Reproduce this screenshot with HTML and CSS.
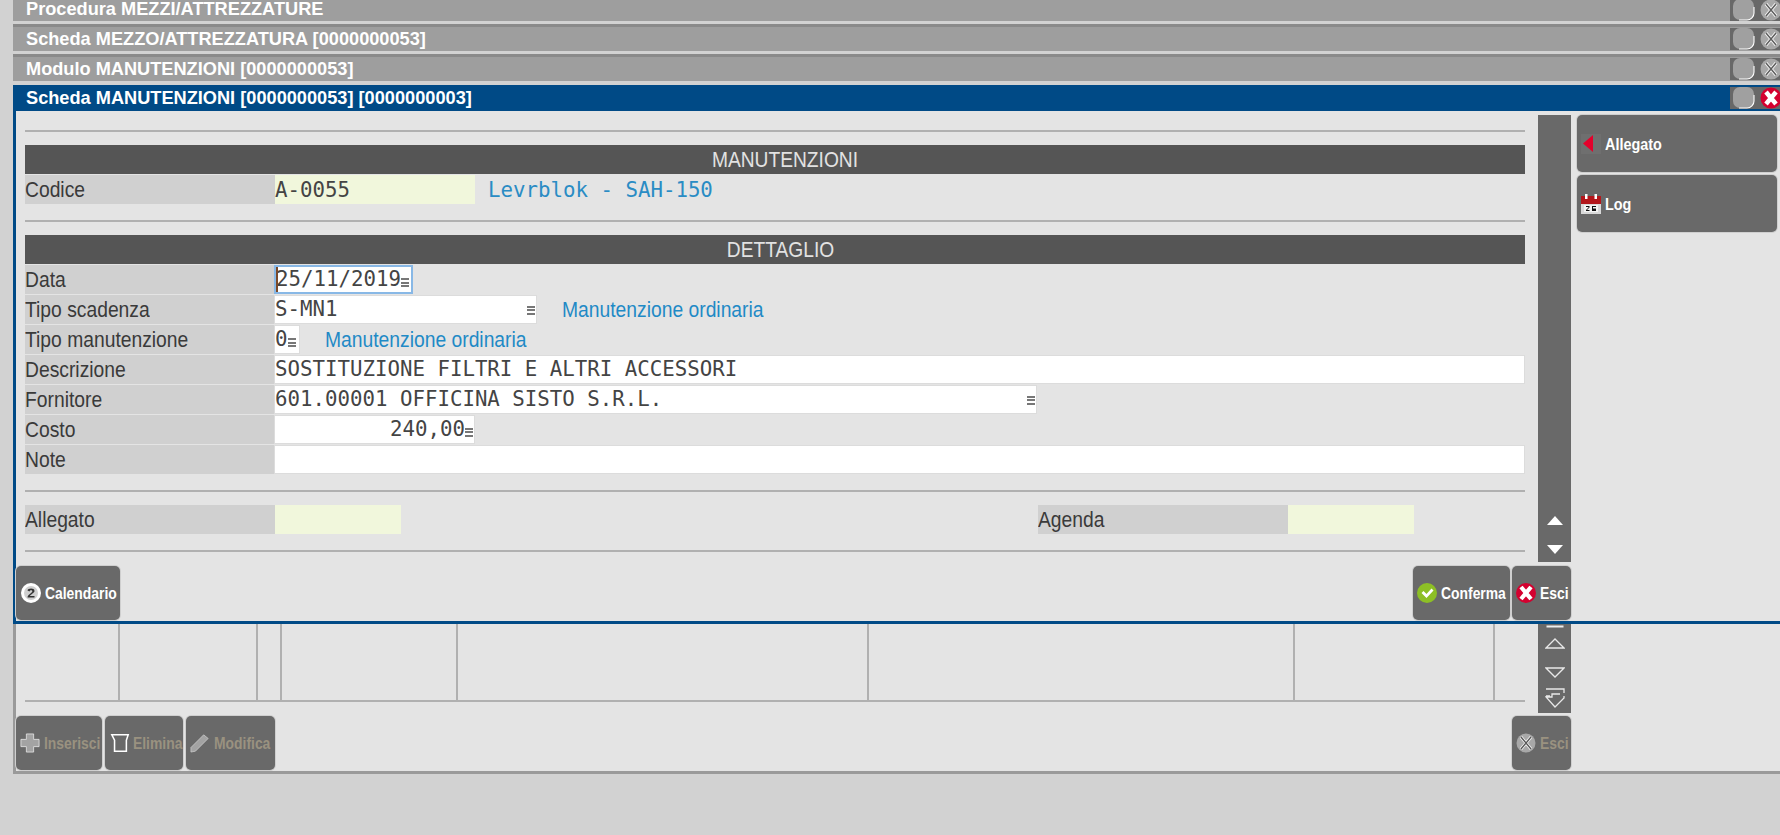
FILE: index.html
```html
<!DOCTYPE html>
<html lang="it">
<head>
<meta charset="utf-8">
<title>Scheda MANUTENZIONI</title>
<link rel="stylesheet" href="styles.css">
</head>
<body>
<div class="desk">
  <div class="tbar tbar-first"><span class="ttext">Procedura MEZZI/ATTREZZATURE</span>
    <span class="wbtns"><svg class="wi" viewBox="0 0 50 22"><use href="#min"/><use href="#tool"/></svg></span></div>
  <div class="tbar"><span class="ttext">Scheda MEZZO/ATTREZZATURA [0000000053]</span>
    <span class="wbtns"><svg class="wi" viewBox="0 0 50 22"><use href="#min"/><use href="#tool"/></svg></span></div>
  <div class="tbar tbar-last"><span class="ttext">Modulo MANUTENZIONI [0000000053]</span>
    <span class="wbtns"><svg class="wi" viewBox="0 0 50 22"><use href="#min"/><use href="#tool"/></svg></span></div>

  <div class="tbar tbar-active"><span class="ttext">Scheda MANUTENZIONI [0000000053] [0000000003]</span>
    <span class="wbtns"><svg class="wi" viewBox="0 0 50 22"><use href="#min"/><circle cx="41" cy="11" r="10.5" fill="#d4002f"/><path d="M36 5l10 12M46 5L36 17" stroke="#fff" stroke-width="4.500"/></svg></span></div>

  <div class="panel">
    <div class="panel-main">
      <div class="form">
        <hr class="rule">
        <div class="shead"><span class="tall">MANUTENZIONI</span></div>
        <div class="row">
          <div class="lab"><span class="tall">Codice</span></div>
          <div class="fld ro w200">A-0055</div>
          <div class="dmono">Levrblok - SAH-150</div>
        </div>
        <hr class="rule rule-b">
        <div class="shead shead-d"><span class="tall">DETTAGLIO</span></div>
        <div class="row">
          <div class="lab"><span class="tall">Data</span></div>
          <div class="fld wdata focus"><span class="caret"></span>25/11/2019<span class="mk"></span></div>
        </div>
        <div class="row">
          <div class="lab"><span class="tall">Tipo scadenza</span></div>
          <div class="fld wtipo">S-MN1<span class="mk mk-end"></span></div>
          <div class="dsans d-tipo"><span class="tall">Manutenzione ordinaria</span></div>
        </div>
        <div class="row">
          <div class="lab"><span class="tall">Tipo manutenzione</span></div>
          <div class="fld wone">0<span class="mk"></span></div>
          <div class="dsans d-man"><span class="tall">Manutenzione ordinaria</span></div>
        </div>
        <div class="row">
          <div class="lab"><span class="tall">Descrizione</span></div>
          <div class="fld wfull">SOSTITUZIONE FILTRI E ALTRI ACCESSORI</div>
        </div>
        <div class="row">
          <div class="lab"><span class="tall">Fornitore</span></div>
          <div class="fld wforn">601.00001 OFFICINA SISTO S.R.L.<span class="mk mk-end"></span></div>
        </div>
        <div class="row">
          <div class="lab"><span class="tall">Costo</span></div>
          <div class="fld w200 right">240,00<span class="mk"></span></div>
        </div>
        <div class="row">
          <div class="lab"><span class="tall">Note</span></div>
          <div class="fld wfull"></div>
        </div>
        <hr class="rule rule-c">
        <div class="row row-duo">
          <div class="lab"><span class="tall">Allegato</span></div>
          <div class="fld ro w126"></div>
          <div class="lab lab-agenda"><span class="tall">Agenda</span></div>
          <div class="fld ro w126"></div>
        </div>
        <hr class="rule rule-d">
      </div>
      <div class="vscroll">
        <svg class="sa" viewBox="0 0 20 14"><path d="M2 12L10 3l8 9z" fill="#fff"/></svg>
        <svg class="sa" viewBox="0 0 20 14"><path d="M2 2l8 9 8-9z" fill="#fff"/></svg>
      </div>
      <div class="side">
        <div class="btn sbtn"><svg class="ic22" viewBox="0 0 20 20"><rect width="20" height="20" fill="#6f6f6f"/><path d="M12 1v17L2 9.500z" fill="#e4002b"/></svg><span class="sbl">Allegato</span></div>
        <div class="btn sbtn"><svg class="ic22" viewBox="0 0 20 20"><rect x="0" y="2" width="20" height="18" fill="#d9d9d9"/><rect x="0" y="2" width="20" height="8" fill="#b3161b"/><rect x="4" y="0" width="2.500" height="5" fill="#fff"/><rect x="13.500" y="0" width="2.500" height="5" fill="#fff"/><rect x="3" y="11" width="14" height="7" fill="#f4f4f4"/><path d="M5 12h3.500v1.500L6 16h2.500v1H5v-1l2.500-2.500V13H5zM11 12h4v1h-3v1.500h3V17h-4z" fill="#111"/></svg><span class="sbl">Log</span></div>
      </div>
    </div>
    <div class="foot">
      <div class="btn b-cal"><svg class="ic20" viewBox="0 0 20 20"><circle cx="10" cy="10" r="10" fill="#fff"/><circle cx="10" cy="10" r="7" fill="#cfcfcf"/><path d="M6.500 7.500c.5-2.500 7-2.800 7 .5 0 2-3.800 3.200-4.500 5H13.500v1.500H6.500c0-3.300 4.800-4.300 4.800-6.300 0-1.400-2.500-1.200-2.800.3z" fill="#333"/></svg><span>Calendario</span></div>
      <div class="foot-right">
        <div class="btn b-conf"><svg class="ic20" viewBox="0 0 20 20"><circle cx="10" cy="10" r="10" fill="#8dbf25"/><path d="M4.500 10l2-2 3 3 5-5.500 2 2-7 7.500z" fill="#fff"/></svg><span>Conferma</span></div>
        <div class="btn b-esci"><svg class="ic20" viewBox="0 0 20 20"><circle cx="10" cy="10" r="10" fill="#d4002f"/><path d="M5 4l10 12M15 4L5 16" stroke="#fff" stroke-width="4.200"/></svg><span>Esci</span></div>
      </div>
    </div>
  </div>

  <div class="lower">
    <div class="lower-main">
      <div class="list">
        <div class="lgrid">
          <div class="lc"></div><div class="lc"></div><div class="lc"></div><div class="lc"></div><div class="lc"></div><div class="lc"></div><div class="lc"></div><div class="lc lc-last"></div>
        </div>
      </div>
      <div class="vscroll2">
        <svg class="lt" viewBox="0 0 20 4"><path d="M1.500 2.500h17" fill="none" stroke="#eee" stroke-width="2"/></svg>
        <svg class="lt" viewBox="0 0 20 14"><path d="M1 12h18L10 3z" fill="none" stroke="#e8e8e8" stroke-width="1.300"/></svg>
        <svg class="lt" viewBox="0 0 20 14"><path d="M1 2h18l-9 9z" fill="none" stroke="#e8e8e8" stroke-width="1.300"/></svg>
        <svg class="lt lt-b" viewBox="0 0 20 20"><path d="M1 1h18v4M1 8h4M19 8v2L10 19 1 9h6V6h8" fill="none" stroke="#e8e8e8" stroke-width="1.300"/></svg>
      </div>
    </div>
    <div class="foot foot-low">
      <div class="low-left">
        <div class="btn b-low b-ins"><svg class="ic20" viewBox="0 0 22 22"><path d="M7 1h8v6h6v8h-6v6H7v-6H1V7h6z" fill="#a3a3a3" stroke="#eee" stroke-width=".8"/></svg><span>Inserisci</span></div>
        <div class="btn b-low b-eli"><svg class="ic20" viewBox="0 0 22 22"><path d="M2 2h18l-2 6v12H5V8z" fill="none" stroke="#fff" stroke-width="1.700"/></svg><span>Elimina</span></div>
        <div class="btn b-low b-mod"><svg class="ic20" viewBox="0 0 22 22"><path d="M1 16L15 2l5 4L6 20l-5 1z" fill="#a3a3a3" stroke="#d8d8d8" stroke-width=".7"/></svg><span>Modifica</span></div>
      </div>
      <div class="btn b-low b-esci"><svg class="ic20" viewBox="0 0 20 20"><use href="#tool20"/></svg><span>Esci</span></div>
    </div>
  </div>
</div>

<svg class="defs" aria-hidden="true">
  <defs>
    <g id="min">
      <rect x="3" y="0" width="21" height="21" rx="7" fill="#a0a0a0"/>
      <path d="M24 8v6a7 7 0 0 1-7 7H9" fill="none" stroke="#fff" stroke-width="1.100"/>
    </g>
    <g id="tool">
      <circle cx="41" cy="11" r="10.500" fill="#a8a8a8"/>
      <path d="M36 5l10 12M46 5L36 17" stroke="#f2f2f2" stroke-width="3.500"/>
      <path d="M36 5l10 12M46 5L36 17" stroke="#5c5c5c" stroke-width="1.400"/>
    </g>
    <g id="tool20">
      <circle cx="10" cy="10" r="9.500" fill="#a8a8a8"/>
      <path d="M5 4l10 12M15 4L5 16" stroke="#f2f2f2" stroke-width="3"/>
      <path d="M5 4l10 12M15 4L5 16" stroke="#555" stroke-width="1.300"/>
    </g>
  </defs>
</svg>
</body>
</html>
```
FILE: styles.css
```css
* { box-sizing: border-box; }
html, body { margin: 0; padding: 0; height: 100%; overflow: hidden; }
body { background: #d2d2d2; font-family: "Liberation Sans", Arial, sans-serif; }
.desk { width: 1780px; height: 835px; padding-left: 13px; overflow: hidden; }

.tbar { height: 24px; background: #9e9e9e; color: #fff; display: flex; align-items: center; justify-content: space-between; margin-top: 6px; box-shadow: 0 -3px 0 #8a8a8a; position: relative; }
.tbar-first { height: 21px; margin-top: 0; box-shadow: none; align-items: flex-start; }
.tbar-last { margin-bottom: 4px; }
.tbar-active { height: 26px; background: #004a86; box-shadow: none; margin-top: 0; }
.ttext { font-size: 18.200px; font-weight: bold; padding-left: 13px; line-height: 22px; white-space: nowrap; }
.tbar-first .ttext { line-height: 19px; }
.tbar-active .ttext { line-height: 24px; }
.wbtns { display: block; width: 50px; height: 22px; background: #686868; flex: none; }
.tbar-first .wbtns { height: 21px; }
.wi { display: block; width: 50px; height: 22px; }
.tbar-first .wi { margin-top: -1px; }
.defs { position: absolute; width: 0; height: 0; }

.panel { height: 513px; background: #e4e4e4; border-left: 3px solid #004a86; border-bottom: 3px solid #004a86; padding-top: 4px; }
.panel-main { display: flex; height: 447px; }
.form { width: 1500px; margin-left: 9px; padding-top: 15px; flex: none; }
.rule { height: 2px; margin: 0 0 13px; border: 0; background: #b0b0b0; }
.rule-b { margin-top: 16px; }
.rule-c { margin-top: 16px; }
.rule-d { margin-top: 16px; margin-bottom: 0; }
.tall { display: inline-block; transform: scaleY(1.13); }
.shead { height: 29px; background: #555; color: #e2e2e2; font-size: 19.200px; line-height: 29px; text-align: center; padding-left: 20px; margin-bottom: 1px; }
.shead-d { padding-left: 11px; }

.row { display: flex; height: 29px; margin-bottom: 1px; align-items: stretch; }
.row-duo { margin-bottom: 0; }
.lab { width: 250px; flex: none; background: #d0d0d0; color: #3a3a3a; font-size: 19.300px; line-height: 29px; white-space: nowrap; }
.lab-agenda { margin-left: 637px; }
.fld { position: relative; flex: none; background: #fff; color: #444; font-family: "DejaVu Sans Mono", "Liberation Mono", monospace; font-size: 20.760px; line-height: 27px; height: 27px; margin-top: 1px; padding-left: 0; box-shadow: 0 0 0 1px #dcdcdc; white-space: nowrap; }
.fld.ro { background: #f1f7dc; height: 29px; margin-top: 0; line-height: 30px; box-shadow: none; }
.w200 { width: 199px; }
.fld.ro.w200 { width: 200px; }
.w126 { width: 126px; }
.wdata { width: 136px; }
.wtipo { width: 261px; }
.wone { width: 24px; }
.wfull { width: 1249px; }
.wforn { width: 761px; }
.right { text-align: right; padding-right: 1px; }
.focus { box-shadow: 0 0 0 2px #88b8e6; height: 25px; margin-top: 2px; line-height: 25px; margin-left: 1px; width: 135px; }
.caret { position: absolute; left: 0; top: 0; width: 2px; height: 25px; background: #7a4a2a; }
.mk { display: inline-block; width: 8px; height: 9px; vertical-align: -1px; background: repeating-linear-gradient(#777 0 2px, #fff 2px 3.500px); }
.mk-end { position: absolute; right: 1px; top: 10px; margin: 0; }

.dmono { font-family: "DejaVu Sans Mono", "Liberation Mono", monospace; font-size: 20.760px; color: #2a8cc4; line-height: 30px; margin-left: 13px; white-space: nowrap; }
.dsans { font-size: 19.300px; color: #1f8ac6; line-height: 29px; white-space: nowrap; }
.d-tipo { margin-left: 26px; }
.d-man { margin-left: 26px; }

.vscroll { width: 33px; margin-left: 13px; background: #696969; display: flex; flex-direction: column; justify-content: flex-end; align-items: center; gap: 16px; padding-bottom: 5px; flex: none; }
.sa { width: 20px; height: 14px; display: block; }
.side { margin-left: 6px; width: 200px; flex: none; display: flex; flex-direction: column; gap: 3px; }

.btn { background: #696969; color: #fff; border-radius: 5px; display: flex; align-items: center; font-weight: bold; height: 54px; flex: none; white-space: nowrap; box-shadow: 0 0 0 1px #cfcfcf; }
.btn span { display: inline-block; transform: scaleY(1.12); }
.sbtn { height: 57px; font-size: 14.400px; padding-left: 4px; }
.sbl { margin-left: 4px; }
.ic22 { width: 20px; height: 20px; display: block; flex: none; }
.ic20 { width: 20px; height: 20px; display: block; flex: none; }

.foot { display: flex; justify-content: space-between; margin-top: 4px; width: 1555px; font-size: 13.900px; }
.foot-right { display: flex; gap: 2px; }
.b-cal { width: 104px; padding-left: 5px; gap: 4px; }
.b-conf { width: 97px; padding-left: 4px; gap: 4px; }
.b-esci { width: 59px; padding-left: 4px; gap: 4px; }

.lower { height: 150px; border-left: 3px solid #9a9a9a; border-bottom: 3px solid #9a9a9a; background: #e4e4e4; }
.lower-main { display: flex; height: 89px; }
.list { width: 1500px; margin-left: 9px; height: 78px; border-bottom: 2px solid #b0b0b0; flex: none; }
.lgrid { display: grid; grid-template-columns: 95px 138px 24px 176px 411px 426px 200px 1fr; height: 76px; }
.lc { border-right: 2px solid #b0b0b0; }
.lc-last { border-right: 0; }
.vscroll2 { width: 33px; margin-left: 13px; background: #696969; flex: none; display: flex; flex-direction: column; align-items: center; }
.lt { width: 20px; height: 14px; display: block; margin-bottom: 16px; }
.lt:first-child { height: 4px; margin-bottom: 8px; }
.lt-b { height: 20px; margin: -8px 0 0; }
.foot-low { margin-top: 3px; }
.low-left { display: flex; gap: 3px; }
.b-low { color: #9a9280; padding-left: 4px; gap: 4px; }
.b-ins { width: 86px; }
.b-eli { width: 78px; padding-left: 5px; gap: 3px; }
.b-mod { width: 89px; }
```
